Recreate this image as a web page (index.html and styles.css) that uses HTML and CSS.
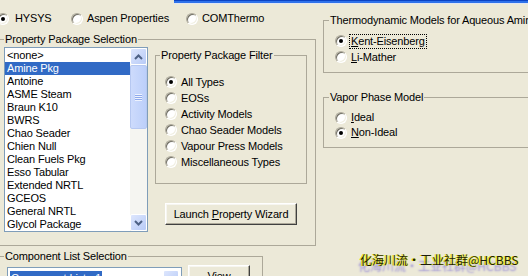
FILE: index.html
```html
<!DOCTYPE html>
<html>
<head>
<meta charset="utf-8">
<link rel="stylesheet" href="styles.css">
</head>
<body>
<div class="band"></div>
<div class="main">
  <div class="left-col">
    <div class="source-row">
      <label class="opt opt-hysys"><span class="radio checked"></span><span class="txt">HYSYS</span></label>
      <label class="opt opt-aspen"><span class="radio"></span><span class="txt">Aspen Properties</span></label>
      <label class="opt"><span class="radio"></span><span class="txt">COMThermo</span></label>
    </div>

    <fieldset class="group pkg-group">
      <legend class="group-title">Property Package Selection</legend>
      <div class="pkg-body">
        <div class="list">
          <div class="items">
            <div class="item">&lt;none&gt;</div>
            <div class="item selected">Amine Pkg</div>
            <div class="item">Antoine</div>
            <div class="item">ASME Steam</div>
            <div class="item">Braun K10</div>
            <div class="item">BWRS</div>
            <div class="item">Chao Seader</div>
            <div class="item">Chien Null</div>
            <div class="item">Clean Fuels Pkg</div>
            <div class="item">Esso Tabular</div>
            <div class="item">Extended NRTL</div>
            <div class="item">GCEOS</div>
            <div class="item">General NRTL</div>
            <div class="item">Glycol Package</div>
          </div>
          <div class="vscroll">
            <div class="sbtn"><svg width="9" height="6" viewBox="0 0 9 6"><polyline points="1,5 4.5,1.5 8,5" fill="none" stroke="#4d6185" stroke-width="2"/></svg></div>
            <div class="thumb"><span class="grip"></span></div>
            <div class="track"></div>
            <div class="sbtn"><svg width="9" height="6" viewBox="0 0 9 6"><polyline points="1,1 4.5,4.5 8,1" fill="none" stroke="#4d6185" stroke-width="2"/></svg></div>
          </div>
        </div>

        <div class="filter-col">
          <fieldset class="group filter-group">
            <legend class="group-title">Property Package Filter</legend>
            <div class="filter-body">
              <label class="opt row16"><span class="radio checked"></span><span class="txt">All Types</span></label>
              <label class="opt row16"><span class="radio"></span><span class="txt">EOSs</span></label>
              <label class="opt row16"><span class="radio"></span><span class="txt">Activity Models</span></label>
              <label class="opt row16"><span class="radio"></span><span class="txt">Chao Seader Models</span></label>
              <label class="opt row16"><span class="radio"></span><span class="txt">Vapour Press Models</span></label>
              <label class="opt row16"><span class="radio"></span><span class="txt">Miscellaneous Types</span></label>
            </div>
          </fieldset>
          <button class="btn wizard-btn">Launch <u>P</u>roperty Wizard</button>
        </div>
      </div>
    </fieldset>

    <fieldset class="group comp-group">
      <legend class="group-title">Component List Selection</legend>
      <div class="comp-body">
        <div class="combo">
          <span class="combo-sel">Component List - 1</span>
          <span class="combo-btn"></span>
        </div>
        <button class="btn view-btn">View</button>
      </div>
    </fieldset>
  </div>

  <div class="right-col">
    <fieldset class="group thermo-group">
      <legend class="group-title">Thermodynamic Models for Aqueous Amine Solutions</legend>
      <div class="right-body">
        <label class="opt row16"><span class="radio checked"></span><span class="txt focus"><u>K</u>ent-Eisenberg</span></label>
        <label class="opt row16"><span class="radio"></span><span class="txt"><u>L</u>i-Mather</span></label>
      </div>
    </fieldset>

    <fieldset class="group vapor-group">
      <legend class="group-title">Vapor Phase Model</legend>
      <div class="right-body">
        <label class="opt row15"><span class="radio"></span><span class="txt"><u>I</u>deal</span></label>
        <label class="opt row15"><span class="radio checked"></span><span class="txt"><u>N</u>on-Ideal</span></label>
      </div>
    </fieldset>
  </div>
</div>

<div class="watermark">化海川流·工业社群@HCBBS</div>
</body>
</html>
```

FILE: styles.css
```css
* { box-sizing: border-box; }
html, body { margin: 0; padding: 0; }
body {
  width: 528px;
  height: 276px;
  overflow: hidden;
  position: relative;
  background: #ECE9D8;
  font: 11px/13px "Liberation Sans", Arial, sans-serif;
  letter-spacing: -0.15px;
  color: #000;
}

.band {
  height: 4px;
  margin-left: 174px;
  background: linear-gradient(#0b43c4 0 1px, #2f72ea 1px 3px, #dfe6f4 3px 4px);
}

.main {
  display: grid;
  grid-template-columns: 317px 230px;
  column-gap: 7px;
  margin-left: -1px;
}

/* ---------- radios ---------- */
.opt {
  display: flex;
  align-items: center;
  gap: 2px;
  white-space: nowrap;
}
.radio {
  position: relative;
  flex: none;
  width: 12px;
  height: 12px;
  border-radius: 50%;
  background: #fff;
  border: 1px solid;
  border-color: #aca899 #fff #fff #aca899;
  box-shadow: inset 1px 1px 0 #716f64, inset -1px -1px 0 #f1efe2;
}
.radio.checked::after {
  content: "";
  position: absolute;
  left: 3px;
  top: 3px;
  width: 4px;
  height: 4px;
  border-radius: 50%;
  background: #000;
}
.txt {
  padding: 0 1px;
  border: 1px solid transparent;
}
.txt.focus { border: 1px dotted #000; }
.row16 { height: 16px; }
.row15 { height: 15px; }

/* ---------- top source row ---------- */
.source-row {
  height: 29px;
  display: flex;
  align-items: center;
}
.opt-hysys { width: 74px; margin-left: -2px; gap: 4px; }
.opt-aspen { width: 115px; }

/* ---------- group boxes ---------- */
.group {
  margin: 0;
  padding: 0;
  min-width: 0;
  border: 1px solid #aca899;
}
.group-title {
  padding: 0 1px;
  margin-left: 4px;
  line-height: 13px;
  white-space: nowrap;
}

.pkg-body {
  height: 199px;
  padding: 1px 0 0 4px;
  display: grid;
  grid-template-columns: 144px 152px;
  column-gap: 7px;
  align-items: start;
}

/* ---------- list box ---------- */
.list {
  height: 185px;
  display: flex;
  border: 1px solid #7f9db9;
  background: #fff;
}
.items {
  flex: 1;
  padding-top: 1px;
  overflow: hidden;
}
.item {
  height: 13px;
  line-height: 13px;
  padding-left: 2px;
  white-space: nowrap;
}
.item.selected {
  background: #316ac5;
  color: #fff;
}
.vscroll {
  width: 17px;
  display: flex;
  flex-direction: column;
  background: #f5f5f1;
}
.sbtn {
  height: 17px;
  flex: none;
  display: flex;
  align-items: center;
  justify-content: center;
  border: 1px solid #fff;
  border-radius: 2px;
  background: linear-gradient(135deg, #dde6fd, #b8cbf7);
}
.thumb {
  height: 64px;
  flex: none;
  display: flex;
  align-items: center;
  justify-content: center;
  border: 1px solid #b6c8f1;
  border-radius: 2px;
  background: linear-gradient(90deg, #cddbfc, #bccffa);
}
.grip {
  width: 7px;
  height: 7px;
  background: repeating-linear-gradient(#eef3fe 0 1px, #8faaec 1px 2px);
}
.track { flex: 1; }

/* ---------- filter ---------- */
.filter-col {
  display: flex;
  flex-direction: column;
  align-items: flex-start;
}
.filter-group {
  width: 152px;
  margin-top: 2px;
}
.filter-body {
  padding: 12px 0 13px 9px;
}

.btn {
  font: 11px/13px "Liberation Sans", Arial, sans-serif;
  letter-spacing: -0.15px;
  color: #000;
  background: #ECE9D8;
  border: 1px solid;
  border-color: #fff #404040 #404040 #fff;
  box-shadow: inset -1px -1px 0 #aca899, inset 1px 1px 0 #f7f6f1;
  padding: 0;
  margin: 0;
}
.wizard-btn {
  width: 132px;
  height: 22px;
  margin: 19px 0 0 10px;
}

/* ---------- component list ---------- */
.comp-group {
  width: 264px;
  margin-top: 4px;
}
.comp-body {
  display: flex;
  gap: 6px;
  padding: 4px 0 0 7px;
  height: 30px;
}
.combo {
  width: 175px;
  height: 22px;
  border: 1px solid #7f9db9;
  background: #fff;
  display: flex;
  align-items: center;
  padding: 2px;
}
.combo-sel {
  background: #316ac5;
  color: #fff;
  padding: 0 1px;
  line-height: 14px;
}
.combo-btn {
  margin-left: auto;
  width: 16px;
  height: 16px;
  border: 1px solid #fff;
  border-radius: 2px;
  background: linear-gradient(135deg, #dde6fd, #b8cbf7);
}
.view-btn {
  width: 62px;
  height: 22px;
  margin-top: -2px;
}

/* ---------- right column ---------- */
.thermo-group {
  margin-top: 10px;
  width: 230px;
}
.thermo-group .group-title,
.vapor-group .group-title { margin-left: 5px; }
.right-body {
  padding: 6px 0 7px 11px;
}
.vapor-group {
  margin-top: 18px;
  width: 230px;
}

/* ---------- watermark overlay ---------- */
.watermark {
  position: absolute;
  left: 360px;
  top: 252px;
  font: 12px/16px "Noto Sans CJK SC", "Noto Sans", sans-serif;
  letter-spacing: 0;
  color: #1c1c10;
  white-space: nowrap;
  text-shadow: -1px 0 0 #f2f200, 1px 0 0 #e8e830, -2px 6px 2px #9a8fd6;
}
```
